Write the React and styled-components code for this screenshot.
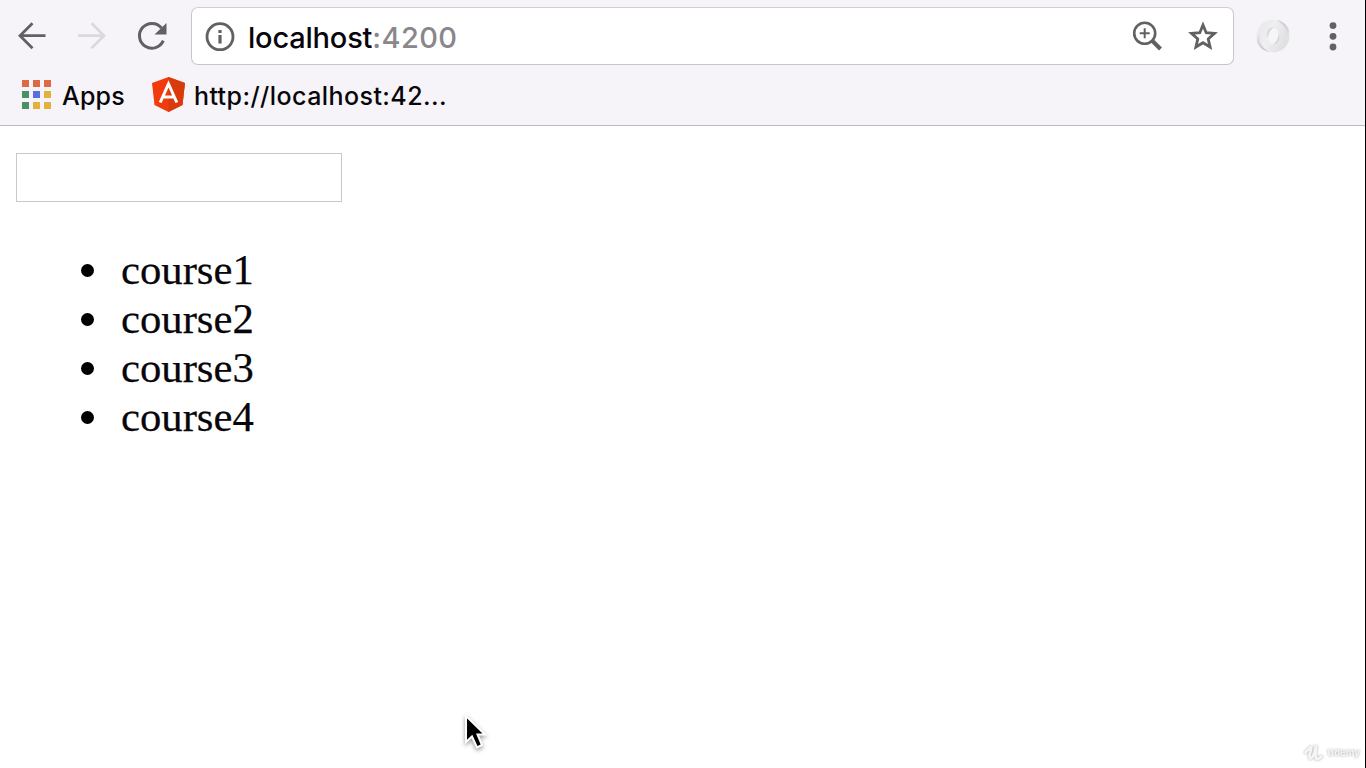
import React from "react";
import styled, { createGlobalStyle } from "styled-components";

const GlobalStyle = createGlobalStyle`
  * { box-sizing: border-box; }
  html, body { margin: 0; padding: 0; overflow: hidden; background: #fff; }
`;

const Window = styled.div`
  position: relative;
  display: flex;
  flex-direction: column;
  width: 1366px;
  height: 768px;
  background: #fff;
  border-right: 1px solid #000;
  overflow: hidden;
`;

const Chrome = styled.header`
  height: 126px;
  flex: none;
  background: #f6f4f8;
  border-bottom: 1px solid #bcbabd;
  font-family: Inter, "Liberation Sans", sans-serif;
`;

const Toolbar = styled.div`
  display: flex;
  align-items: center;
  height: 72px;
  padding: 0 12px;
`;

const NavButtons = styled.nav`
  display: flex;
  gap: 20px;
  margin-right: 19px;
`;

const IconButton = styled.button`
  display: flex;
  flex: none;
  width: 40px;
  height: 40px;
  padding: 0;
  border: 0;
  background: none;
  color: ${(p) => (p.$muted ? "#dbd9dc" : "#616063")};
`;

const AddressBar = styled.div`
  display: flex;
  align-items: center;
  width: 1043px;
  height: 58px;
  flex: none;
  padding: 0 10px 0 8px;
  border: 1px solid #c7c5c9;
  border-top-color: #d0ced2;
  border-radius: 7px;
  background: #fff;
`;

const Address = styled.div`
  flex: 1;
  margin-left: 8px;
  padding-top: 3px;
  font-size: 29px;
  font-weight: 450;
  line-height: 40px;
  letter-spacing: -0.2px;
  color: #08060a;
  white-space: nowrap;
`;

const Port = styled.span`
  color: #89878c;
  letter-spacing: 0.4px;
`;

const AddressActions = styled.div`
  display: flex;
  gap: 16px;
`;

const Extensions = styled.div`
  display: flex;
  gap: 20px;
  margin-left: 19px;
`;

const Bookmarks = styled.div`
  display: flex;
  align-items: center;
  height: 46px;
  padding-left: 22px;
`;

const Bookmark = styled.a`
  display: flex;
  align-items: center;
  gap: ${(p) => p.$gap};
  margin-right: 27px;
  font-size: 25px;
  font-weight: 450;
  line-height: 36px;
  letter-spacing: ${(p) => p.$tracking};
  color: #08060a;
  white-space: nowrap;
`;

const BookmarkLabel = styled.span`
  padding-top: 2px;
`;

const AppsGrid = styled.span`
  display: grid;
  grid-template-columns: repeat(3, 7px);
  gap: 4px;
  margin-bottom: 1px;
`;

const AppsCell = styled.i`
  height: 7px;
  background: ${(p) => p.$color};
`;

const Page = styled.main`
  flex: 1;
  padding: 27px 16px;
  font-family: "Liberation Serif", "Times New Roman", serif;
`;

const TextInput = styled.input`
  display: block;
  width: 326px;
  height: 49px;
  padding: 0 6px;
  border: 1px solid #c9c9c9;
  background: #fff;
  font: inherit;
  font-size: 30px;
  outline: 0;
`;

const CourseList = styled.ul`
  margin: 43px 0 0;
  padding: 0 0 0 65px;
  list-style: none;
`;

const Course = styled.li`
  display: flex;
  align-items: center;
  height: 49px;
  gap: 27px;
  font-size: 42.7px;
  line-height: 49px;
  color: #08060a;
  -webkit-text-stroke: 0.25px #08060a;

  &::before {
    content: "";
    width: 13px;
    height: 13px;
    margin-top: 2px;
    border-radius: 50%;
    background: #000;
  }
`;

const Pointer = styled.svg`
  position: absolute;
  left: 458px;
  top: 708px;
  filter: drop-shadow(0 2px 2px rgba(0, 0, 0, 0.4));
`;

const Watermark = styled.div`
  position: absolute;
  right: 5px;
  bottom: 5px;
  display: flex;
  align-items: center;
  gap: 4px;
  font: 700 9.5px/20px Inter, sans-serif;
  color: #f6f4f6;
  filter: drop-shadow(0 0 1px rgba(90, 80, 90, 0.5));
`;

const APP_COLORS = ["#dd6a45", "#dd6a45", "#dd6a45", "#4b9166", "#5a70e0", "#e2b23c", "#4b9166", "#e2b23c", "#e2b23c"];
const COURSES = ["course1", "course2", "course3", "course4"];

const Icon = ({ children, width = 40, height = 40, ...rest }) => (
  <svg width={width} height={height} viewBox={`0 0 ${width} ${height}`} fill="none" stroke="currentColor" strokeWidth="2.8" {...rest}>
    {children}
  </svg>
);

const AngularLogo = () => (
  <svg width="33" height="36" viewBox="0 0 33 36">
    <path d="M16.5 0 33 6 30.5 28 16.5 35 2.5 28 0 6Z" fill="#f03c0c" />
    <path d="M16.5 0 33 6 30.5 28 16.5 35Z" fill="#d93a0c" />
    <path d="M8.2 25.5 16.5 7 24.8 25.5M11.5 20H21.5" fill="none" stroke="#fff" strokeWidth="3" />
  </svg>
);

const RingLogo = () => (
  <svg width="40" height="40" viewBox="0 0 40 40">
    <defs>
      <linearGradient id="ringBase" x1="0" y1="0" x2="1" y2="0.4">
        <stop offset="0" stopColor="#e6e5e7" />
        <stop offset="0.5" stopColor="#efeef0" />
        <stop offset="1" stopColor="#e0dfe1" />
      </linearGradient>
      <linearGradient id="ringShade" x1="0" y1="0" x2="0" y2="1">
        <stop offset="0" stopColor="#c9c8cb" />
        <stop offset="1" stopColor="#e6e5e7" />
      </linearGradient>
      <linearGradient id="ringShadeLow" x1="0" y1="1" x2="0" y2="0">
        <stop offset="0" stopColor="#c9c8cb" />
        <stop offset="1" stopColor="#e6e5e7" />
      </linearGradient>
    </defs>
    <path fillRule="evenodd" d="M20 3.500A16.500 16.500 0 1 0 20 36.500A16.500 16.500 0 1 0 20 3.500ZM20.500 12C24 12 25.500 15.500 25.500 20C25.500 25 23.500 28.500 20.500 28.500C17 28.500 15 25 15 20.500C15 15.500 17 12 20.500 12Z" fill="url(#ringBase)" />
    <path d="M24 4C32 9 35 15 32.500 23C36 19 37.500 15 34.500 11C32 7 28.500 5 24 4Z" fill="url(#ringShade)" />
    <path d="M16 36C8 31 5 25 7.500 17C4 21 2.500 25 5.500 29C8 33 11.500 35 16 36Z" fill="url(#ringShadeLow)" />
    <path d="M14.500 22C13 16 16 11 21 11.500C17.500 13 16 16 14.500 22ZM26 18C27.500 24 24.500 29 19.500 28.500C23 27 24.500 24 26 18Z" fill="#d6d5d8" />
  </svg>
);

export default function App() {
  return (
    <Window>
      <GlobalStyle />
      <Chrome>
        <Toolbar>
          <NavButtons>
            <IconButton aria-label="Back">
              <Icon><path d="M33.5 19.7H8M20.5 7.2 8 19.7 20.5 32.2" /></Icon>
            </IconButton>
            <IconButton aria-label="Forward" $muted>
              <Icon><path d="M6 19.7H32M19.5 7.2 32 19.7 19.5 32.2" /></Icon>
            </IconButton>
            <IconButton aria-label="Reload">
              <Icon>
                <path d="M29.5 12A12.4 12.4 0 1 0 31.3 24.7" strokeWidth="3" />
                <path d="M34.5 7V18.500H22.5Z" fill="currentColor" stroke="none" />
              </Icon>
            </IconButton>
          </NavButtons>
          <AddressBar>
            <IconButton aria-label="Site information">
              <Icon>
                <circle cx="20" cy="20.7" r="13" />
                <path d="M20 19V27.5M20 14V17" strokeWidth="3.2" />
              </Icon>
            </IconButton>
            <Address>localhost<Port>:4200</Port></Address>
            <AddressActions>
              <IconButton aria-label="Zoom">
                <Icon>
                  <circle cx="17.7" cy="17.3" r="10.5" strokeWidth="2.6" />
                  <path d="M17.7 12.3V22.3M12.700 17.3H22.700" strokeWidth="2" />
                  <path d="m25.5 25 8 8" strokeWidth="4" />
                </Icon>
              </IconButton>
              <IconButton aria-label="Bookmark">
                <Icon>
                  <path d="M20 9 23.2 16.7 31.5 17.4 25.2 22.9 27.1 31 20 26.7 12.9 31 14.8 22.9 8.5 17.4 16.8 16.7Z" />
                </Icon>
              </IconButton>
            </AddressActions>
          </AddressBar>
          <Extensions>
            <IconButton aria-label="Extension"><RingLogo /></IconButton>
            <IconButton aria-label="Menu">
              <Icon stroke="none" fill="currentColor">
                <circle cx="20" cy="9.6" r="3.4" />
                <circle cx="20" cy="20.3" r="3.4" />
                <circle cx="20" cy="31" r="3.4" />
              </Icon>
            </IconButton>
          </Extensions>
        </Toolbar>
        <Bookmarks>
          <Bookmark $gap="11px" $tracking="0.2px">
            <AppsGrid>
              {APP_COLORS.map((color, i) => <AppsCell key={i} $color={color} />)}
            </AppsGrid>
            <BookmarkLabel>Apps</BookmarkLabel>
          </Bookmark>
          <Bookmark $gap="9px" $tracking="0.43px">
            <AngularLogo />
            <BookmarkLabel>http://localhost:42...</BookmarkLabel>
          </Bookmark>
        </Bookmarks>
      </Chrome>
      <Page>
        <TextInput aria-label="Course name" />
        <CourseList>
          {COURSES.map((name) => <Course key={name}>{name}</Course>)}
        </CourseList>
      </Page>
      <Pointer width="36" height="46" viewBox="0 0 36 46">
        <path d="M8 8V34L14 28.5 19 39.5 24 37 19.5 26.5H27Z" fill="#000" stroke="#fff" strokeWidth="2" />
      </Pointer>
      <Watermark>
        <svg width="19" height="18" viewBox="0 0 19 18" fill="none" stroke="currentColor" strokeWidth="2.8" strokeLinecap="round" strokeLinejoin="round">
          <path d="M1.5 8.5C4 6 5.5 3.5 7 3C7.5 7 4 13 6 14.5C8.5 15 11 8 12 2.5C12 7 10.5 14.5 13 15C15 15 16.5 13.5 17.5 12.5" />
        </svg>
        Udemy
      </Watermark>
    </Window>
  );
}
